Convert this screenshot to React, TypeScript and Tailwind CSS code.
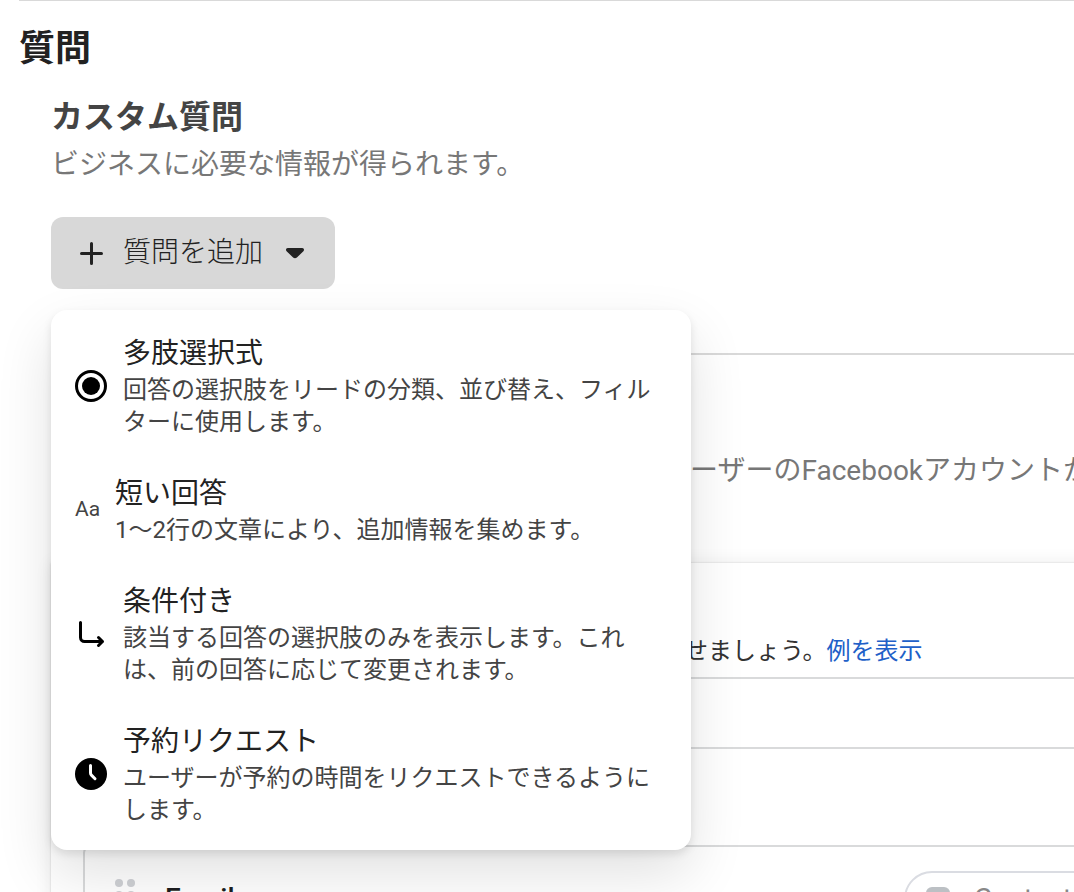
import type { ReactNode } from "react";

const PlusIcon = () => (
  <svg className="h-8 w-8 shrink-0" viewBox="0 0 32 32" fill="none" aria-hidden="true">
    <path d="M16.5 6.5v20M6.5 16.5h20" stroke="#222" strokeWidth="3" strokeLinecap="round" />
  </svg>
);

const CaretIcon = () => (
  <svg className="h-8 w-8 shrink-0" viewBox="0 0 32 32" aria-hidden="true">
    <path
      d="M8.800 11h14.400c1.800 0 2.400 2.100 1.200 3.300l-6.500 6.200c-1.100 1.100-2.700 1.100-3.800 0l-6.500-6.200C6.400 13.100 7 11 8.800 11z"
      fill="#222"
    />
  </svg>
);

const RadioIcon = () => (
  <svg className="h-8 w-8 shrink-0" viewBox="0 0 32 32" aria-hidden="true">
    <circle cx="16" cy="16" r="14.500" fill="none" stroke="#000" strokeWidth="3" />
    <circle cx="16" cy="16" r="9" fill="#000" />
  </svg>
);

const BranchIcon = () => (
  <svg className="h-8 w-8 shrink-0" viewBox="0 0 32 32" fill="none" aria-hidden="true">
    <path
      d="M5.500 4.500v15a4 4 0 0 0 4 4h18M23.500 19.500l4 4-4 4"
      stroke="#000"
      strokeWidth="3"
      strokeLinecap="round"
      strokeLinejoin="round"
    />
  </svg>
);

const ClockIcon = () => (
  <svg className="h-8 w-8 shrink-0" viewBox="0 0 32 32" fill="none" aria-hidden="true">
    <circle cx="16" cy="16" r="16" fill="#000" />
    <path
      d="M15.500 7.500v7.500a3 3 0 0 0 .9 2.100l3.600 3.600"
      stroke="#fff"
      strokeWidth="3"
      strokeLinecap="round"
      strokeLinejoin="round"
    />
  </svg>
);

const GripIcon = () => (
  <svg className="h-10 w-5 shrink-0" viewBox="0 0 20 40" fill="#cfd1d5" aria-hidden="true">
    {[4, 16, 28].map((y) => (
      <g key={y}>
        <circle cx="4" cy={y} r="4" />
        <circle cx="16" cy={y} r="4" />
      </g>
    ))}
  </svg>
);

type Option = {
  title: string;
  text: string;
  icon: ReactNode;
};

const options: Option[] = [
  {
    title: "多肢選択式",
    text: "回答の選択肢をリードの分類、並び替え、フィルターに使用します。",
    icon: <RadioIcon />,
  },
  {
    title: "短い回答",
    text: "1〜2行の文章により、追加情報を集めます。",
    icon: <span className="w-6 shrink-0 text-[21px] text-[#444]">Aa</span>,
  },
  {
    title: "条件付き",
    text: "該当する回答の選択肢のみを表示します。これは、前の回答に応じて変更されます。",
    icon: <BranchIcon />,
  },
  {
    title: "予約リクエスト",
    text: "ユーザーが予約の時間をリクエストできるようにします。",
    icon: <ClockIcon />,
  },
];

const AddQuestionMenu = () => (
  <div
    role="menu"
    className="absolute top-full left-0 z-10 mt-[21px] w-[640px] rounded-2xl bg-white py-1.5 shadow-[0_24px_56px_rgba(0,0,0,0.12),0_4px_8px_rgba(0,0,0,0.1)]"
  >
    {options.map((option) => (
      <button
        key={option.title}
        type="button"
        role="menuitem"
        className="flex w-full items-center gap-4 px-6 py-[18px] text-left"
      >
        {option.icon}
        <span className="flex flex-col gap-1 pt-1">
          <span className="text-[28px] leading-8 text-[#222]">{option.title}</span>
          <span className="text-2xl leading-8 text-[#444]">{option.text}</span>
        </span>
      </button>
    ))}
  </div>
);

export default function App() {
  return (
    <div
      lang="ja"
      className="h-screen overflow-hidden bg-white pl-[19px] font-['Roboto','Noto_Sans_CJK_JP',sans-serif]"
    >
      <main className="border-t border-[#d9d9d9] pt-6">
        <h1 className="text-4xl leading-[48px] font-bold text-[#222]">質問</h1>

        <div className="pl-8">
          <section>
            <h2 className="mt-6 text-[32px] leading-10 font-bold text-[#444]">カスタム質問</h2>
            <p className="mt-2 text-[28px] leading-10 text-[#777]">ビジネスに必要な情報が得られます。</p>

            <div className="relative mt-8 w-fit">
              <button
                type="button"
                aria-haspopup="menu"
                aria-expanded="true"
                className="flex h-18 items-center gap-4 rounded-xl bg-[#d8d8d8] px-6 text-[28px] leading-10 font-light text-[#222]"
              >
                <PlusIcon />
                質問を追加
                <CaretIcon />
              </button>
              <AddQuestionMenu />
            </div>
          </section>

          <section className="mt-16 border-t-2 border-[#d9d9d9] pt-24">
            <p className="pl-[639px] text-[28px] leading-10 whitespace-nowrap text-[#777]">
              ーザーのFacebookアカウントから
            </p>

            <div className="mt-18 -mr-8 bg-white pt-18 pl-8 shadow-[0_0_2px_rgba(0,0,0,0.15),0_0_16px_rgba(0,0,0,0.08)]">
              <p className="pl-[601px] text-2xl leading-8 whitespace-nowrap text-[#333]">
                せましょう。
                <a href="#" className="text-[#2160c8]">
                  例を表示
                </a>
              </p>
              <div className="mt-2.5 h-18 border-y-2 border-[#d9dadb]" />

              <div className="mt-24 flex items-center rounded-tl-lg border-2 border-[#d9dadb] py-6 pl-[30px]">
                <GripIcon />
                <span className="pl-[30px] text-[28px] leading-9 font-medium text-[#1c1e21]">Email</span>
                <button
                  type="button"
                  className="mr-1 ml-auto flex h-14 w-[196px] shrink-0 items-center gap-6 rounded-full border-2 border-[#dadce2] pl-5 text-[28px] leading-9 text-[#888]"
                >
                  <span className="h-6 w-6 shrink-0 rounded-md bg-[#bcc0c4]" />
                  Contact
                </button>
              </div>
            </div>
          </section>
        </div>
      </main>
    </div>
  );
}
